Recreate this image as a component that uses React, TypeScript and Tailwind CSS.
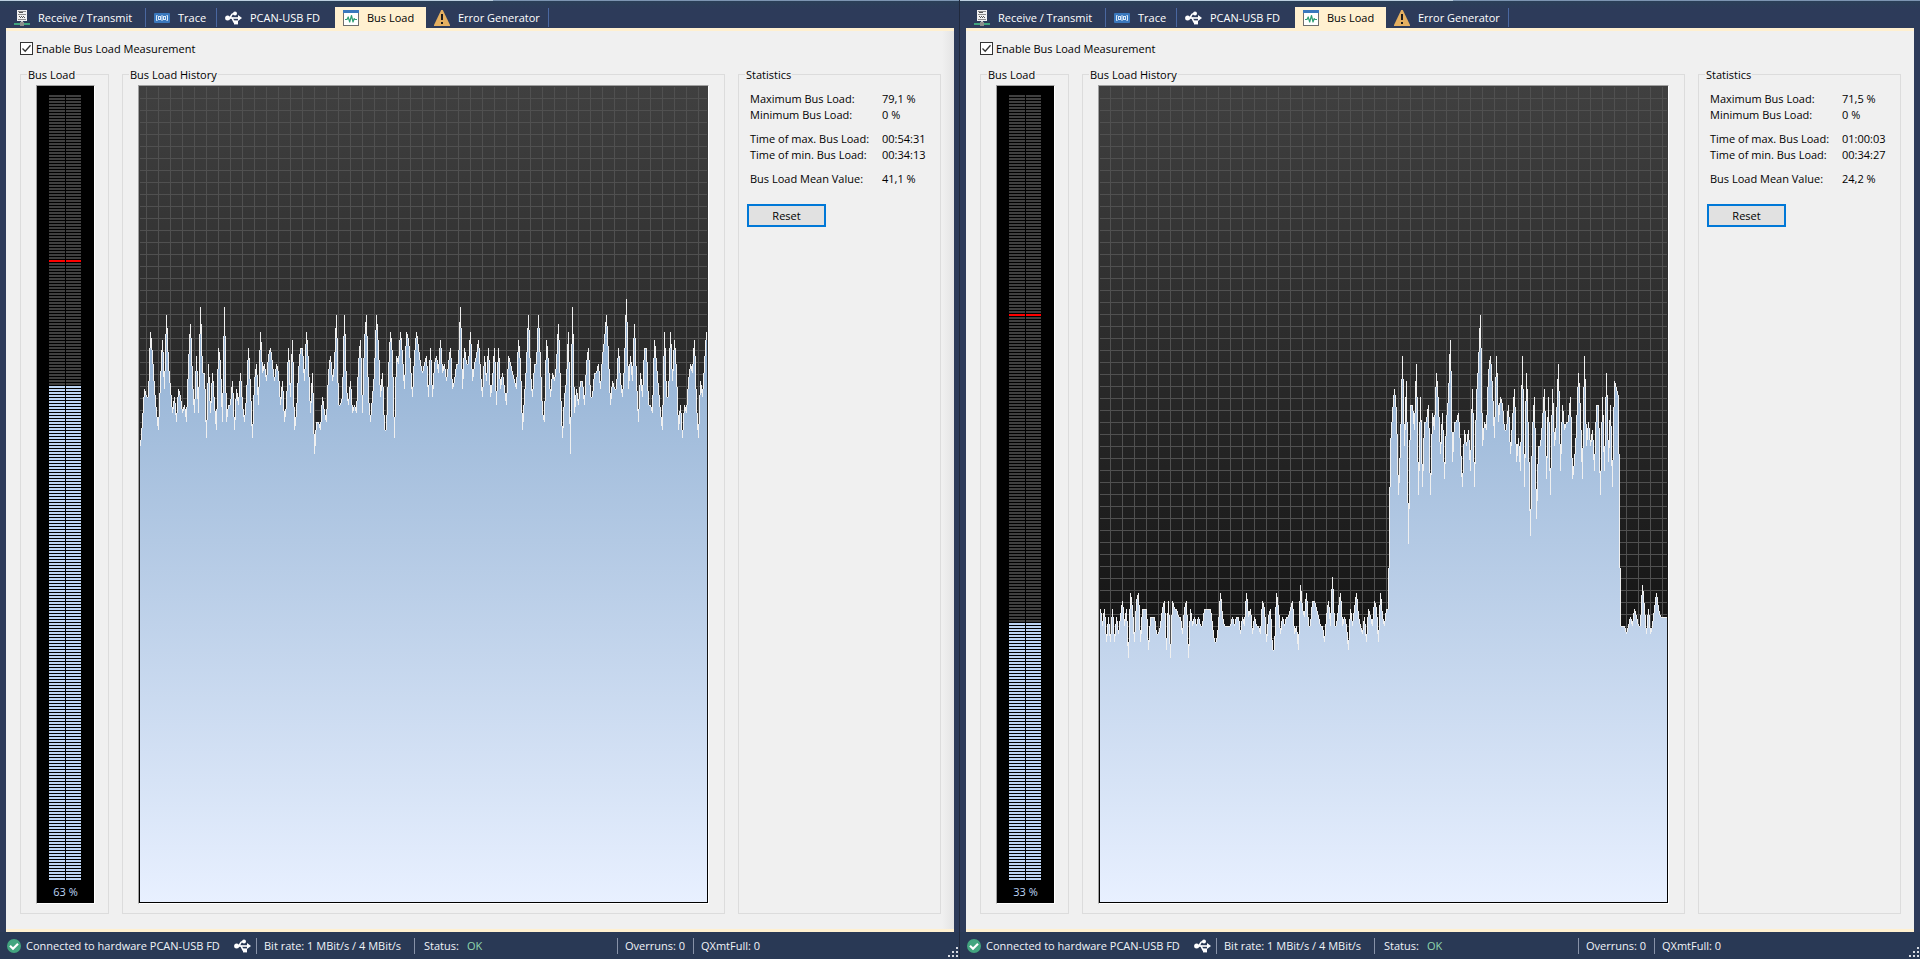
import React from 'react';

type Monitor = {
  id: string;
  load: number;
  lit: number;
  peak: number;
  gridOffset: number;
  history: number[];
  max: string;
  min: string;
  timeMax: string;
  timeMin: string;
  mean: string;
  shaded: boolean;
};

const LEFT_HISTORY = [
  56, 59, 63, 62, 62, 70, 67, 63, 60, 58, 64, 69, 63, 72, 66, 63, 60, 62, 59, 63, 62, 60, 61, 59, 66, 71, 64, 60, 67, 60,
  73, 65, 65, 57, 66, 60, 65, 61, 58, 68, 66, 59, 73, 59, 61, 61, 64, 58, 63, 61, 65, 61, 59, 62, 68, 63, 57, 64, 66, 61,
  70, 65, 66, 64, 67, 68, 66, 64, 66, 65, 61, 64, 59, 61, 68, 62, 69, 58, 60, 65, 68, 68, 64, 70, 66, 60, 65, 55, 59, 59,
  58, 62, 60, 59, 65, 67, 64, 66, 72, 61, 61, 62, 72, 63, 61, 64, 60, 61, 60, 66, 69, 60, 69, 72, 62, 59, 62, 65, 72, 68,
  62, 65, 58, 58, 65, 70, 67, 57, 67, 66, 70, 67, 63, 70, 69, 66, 62, 67, 70, 68, 66, 65, 66, 67, 62, 68, 62, 66, 67, 65,
  69, 65, 66, 64, 66, 68, 63, 64, 66, 66, 73, 63, 68, 66, 66, 70, 64, 66, 67, 69, 65, 62, 67, 64, 68, 62, 64, 68, 61, 68,
  63, 65, 63, 61, 67, 66, 65, 64, 63, 69, 66, 58, 62, 66, 72, 65, 62, 66, 66, 72, 66, 60, 59, 69, 66, 62, 65, 64, 66, 71,
  63, 57, 62, 64, 70, 55, 73, 60, 63, 61, 64, 64, 61, 66, 68, 62, 62, 65, 65, 66, 63, 67, 69, 72, 67, 61, 64, 63, 63, 68,
  64, 62, 66, 74, 63, 67, 64, 71, 64, 59, 65, 62, 68, 68, 61, 61, 60, 69, 66, 63, 60, 58, 70, 62, 62, 70, 64, 69, 65, 58,
  61, 57, 61, 60, 64, 66, 65, 69, 61, 57, 64, 62, 66, 70,
];

const RIGHT_HISTORY = [
  36, 34, 36, 32, 35, 32, 36, 32, 35, 33, 35, 37, 34, 36, 30, 38, 36, 32, 37, 38, 32, 36, 36, 36, 31, 35, 35, 35, 33, 33,
  34, 36, 37, 31, 37, 30, 37, 36, 36, 35, 35, 33, 36, 37, 30, 36, 34, 35, 34, 35, 34, 34, 36, 36, 36, 36, 34, 32, 32, 34,
  38, 35, 34, 34, 34, 34, 35, 34, 35, 35, 33, 35, 34, 38, 35, 36, 33, 35, 34, 34, 33, 37, 36, 32, 35, 36, 31, 31, 38, 36,
  33, 35, 34, 35, 35, 36, 37, 33, 34, 31, 39, 36, 35, 38, 34, 34, 37, 37, 36, 35, 34, 34, 32, 35, 37, 34, 40, 34, 34, 36,
  38, 34, 35, 34, 31, 36, 34, 36, 38, 35, 34, 33, 35, 32, 36, 35, 34, 37, 36, 32, 38, 35, 34, 36, 36, 56, 60, 63, 60, 50,
  56, 67, 56, 64, 44, 61, 61, 58, 66, 50, 62, 51, 59, 59, 61, 50, 60, 58, 65, 61, 55, 60, 52, 59, 62, 69, 54, 59, 59, 60,
  56, 51, 58, 56, 58, 53, 63, 51, 62, 66, 72, 56, 59, 58, 65, 67, 63, 57, 67, 59, 62, 61, 58, 58, 61, 55, 59, 63, 54, 57,
  53, 67, 51, 65, 57, 45, 58, 62, 47, 56, 56, 59, 63, 52, 62, 50, 63, 56, 59, 66, 53, 61, 58, 59, 59, 62, 52, 54, 58, 65,
  60, 52, 67, 56, 59, 56, 58, 53, 61, 61, 50, 62, 53, 65, 54, 61, 51, 64, 63, 62, 34, 34, 34, 33, 34, 35, 34, 36, 35, 34,
  34, 39, 36, 33, 36, 33, 34, 36, 38, 36, 35, 35, 35, 35,
];

const MONITORS: Monitor[] = [
  {
    id: 'a', load: 63, lit: 97, peak: 55, gridOffset: 6, history: LEFT_HISTORY,
    max: '79,1 %', min: '0 %', timeMax: '00:54:31', timeMin: '00:34:13', mean: '41,1 %', shaded: true,
  },
  {
    id: 'b', load: 33, lit: 176, peak: 73, gridOffset: 10, history: RIGHT_HISTORY,
    max: '71,5 %', min: '0 %', timeMax: '01:00:03', timeMin: '00:34:27', mean: '24,2 %', shaded: false,
  },
];

const PLOT_W = 567;
const PLOT_H = 816;
const SEGMENTS = 262;

/** One vertical span per pixel column, two columns per sample. */
function columnSpans(values: number[]): [number, number][] {
  const ys = values.map((v) => PLOT_H + 1 - (v * PLOT_H) / 100);
  const spans: [number, number][] = [];
  ys.forEach((y, i) => {
    const prev = i > 0 ? ys[i - 1] : y;
    const next = i < ys.length - 1 ? ys[i + 1] : y;
    const a = y + (prev - y) / 4;
    const b = y + (next - y) / 4;
    spans.push([Math.min(y, a, b), Math.max(y, a, b)]);
    if (i < ys.length - 1) {
      const c = y + ((next - y) * 3) / 4;
      spans.push([Math.min(b, c), Math.max(b, c)]);
    }
  });
  return spans.map(([t, b]) => [Math.round(t), Math.max(Math.round(t) + 1, Math.round(b))]);
}

function HistoryPlot({ m }: { m: Monitor }) {
  const spans = columnSpans(m.history);
  const line = spans.map(([t, b], x) => `M${x} ${t}h1V${b}h-1z`).join('');
  const area = `M0 ${PLOT_H}` + spans.map(([t], x) => `L${x} ${t}h1`).join('') + `V${PLOT_H}z`;
  return (
    <svg
      className="block h-0 min-h-0 w-full flex-1"
      viewBox={`0 0 ${PLOT_W} ${PLOT_H}`}
      preserveAspectRatio="none"
      shapeRendering="crispEdges"
      role="img"
      aria-label="Bus Load History"
    >
      <defs>
        <linearGradient id={`sky-${m.id}`} gradientUnits="userSpaceOnUse" x1="0" y1="0" x2="0" y2={PLOT_H}>
          <stop offset="0" stopColor="#7098c2" />
          <stop offset="1" stopColor="#e8f0ff" />
        </linearGradient>
        <pattern id={`grid-${m.id}`} patternUnits="userSpaceOnUse" x={m.gridOffset} y="0" width="12" height="12">
          <path d="M0 0h1v12h-1z M0 0h12v1h-12z" fill="#505050" />
        </pattern>
      </defs>
      <rect x="0" y="1" width={PLOT_W} height={PLOT_H - 1} fill={`url(#grid-${m.id})`} />
      <path d={area} fill={`url(#sky-${m.id})`} />
      <path d={line} fill="#f0f0f0" />
    </svg>
  );
}

function Meter({ m }: { m: Monitor }) {
  const bars = [];
  for (let i = 0; i < SEGMENTS; i++) {
    const fill = i === m.peak ? '#ff0000' : i >= m.lit ? '#bdd5f5' : '#404040';
    bars.push(<path key={i} d={`M0 ${i * 3}h16v2h-16z M17 ${i * 3}h15v2h-15z`} fill={fill} />);
  }
  return (
    <div className="flex min-h-0 flex-1 flex-col border border-t-[#a0a0a0] border-l-[#a0a0a0] border-r-white border-b-white bg-black px-3 pt-[9px]">
      <svg className="block h-0 min-h-0 w-8 flex-1" viewBox="0 0 32 785" preserveAspectRatio="none" shapeRendering="crispEdges" role="img" aria-label="Bus Load">
        {bars}
      </svg>
      <div className="flex h-[23px] items-center justify-center whitespace-nowrap text-[#bdd5f5]">{m.load} %</div>
    </div>
  );
}

function ServerIcon() {
  return (
    <svg width="16" height="16" viewBox="0 0 16 16" shapeRendering="crispEdges" aria-hidden="true">
      <path d="M3 0h10v11H3z" fill="#f2f2f2" />
      <path d="M4 1h8v1H4z M4 4h8v1H4z M4 9h8v1H4z" fill="#8a8a8a" />
      <path d="M5 2h4v1H5z M5 6h1v1H5z M6 7h1v1H6z M7 6h1v1H7z M8 7h1v1H8z M9 6h1v1H9z M10 7h1v1h-1z" fill="#555" />
      <path d="M7 11h2v1H7z" fill="#c8c8c8" />
      <path d="M0 13h16v2H0z" fill="#41a47d" />
      <path d="M6 12h4v4H6z" fill="#8d8d8d" />
    </svg>
  );
}

function TraceIcon() {
  return (
    <svg width="16" height="16" viewBox="0 0 16 16" aria-hidden="true">
      <rect x="0" y="3" width="16" height="10" rx="1" fill="#3a78bd" />
      <g fill="none" stroke="#dce9f7" strokeWidth="1">
        <path d="M3.5 5.5h-1v5h1 M12.5 5.5h1v5h-1 M8 5v6" />
        <rect x="4.5" y="6.5" width="2" height="3" />
        <rect x="9.5" y="6.5" width="2" height="3" />
      </g>
    </svg>
  );
}

function UsbIcon() {
  return (
    <svg width="17" height="16" viewBox="0 0 17 16" className="shrink-0" aria-hidden="true">
      <circle cx="2.6" cy="8" r="2.5" fill="#fff" />
      <path d="M2 8h11.5" stroke="#fff" strokeWidth="1.6" />
      <path d="M13 5l4 3-4 3z" fill="#fff" />
      <path d="M4.5 8C6 8 6 3.7 8 3.7h1.6 M6.5 8c1.6 0 1.6 4.3 3.2 4.3h1" stroke="#fff" strokeWidth="1.6" fill="none" />
      <circle cx="10" cy="3.6" r="2" fill="#fff" />
      <rect x="9" y="10.4" width="4" height="4" fill="#fff" />
    </svg>
  );
}

function BusLoadIcon() {
  return (
    <svg width="16" height="16" viewBox="0 0 16 16" aria-hidden="true">
      <path d="M0 0h16v16H0z" fill="#6f6f6f" />
      <path d="M1 3h14v12H1z" fill="#fff" />
      <path d="M0 0h16v3H0z" fill="#3a78bd" />
      <path d="M2 9.5h2l1.2-2.5 1.5 5 1.8-6.5 1.5 6.5 1.2-3.5 .8 1h2" stroke="#2f9e73" strokeWidth="1.2" fill="none" strokeLinejoin="round" />
    </svg>
  );
}

function WarningIcon() {
  return (
    <svg width="16" height="16" viewBox="0 0 16 16" aria-hidden="true">
      <path d="M7.2 0h1.6L16 15v1H0v-1z" fill="#e5b060" />
      <path d="M7 4h2v6H7z M7 12h2v2H7z" fill="#1c1c1c" />
    </svg>
  );
}

function ConnectedIcon() {
  return (
    <svg width="14" height="14" viewBox="0 0 14 14" className="shrink-0" aria-hidden="true">
      <circle cx="7" cy="7" r="7" fill="#43a57f" />
      <path d="M3 6.8l3 3 5-5" stroke="#fff" strokeWidth="2.2" fill="none" />
    </svg>
  );
}

function Divider({ className }: { className: string }) {
  return <span className={`w-px shrink-0 ${className}`} />;
}

const TABS = [
  { label: 'Receive / Transmit', icon: <ServerIcon />, width: 'w-[139px]' },
  { label: 'Trace', icon: <TraceIcon />, width: 'w-[70px]' },
  { label: 'PCAN-USB FD', icon: <UsbIcon />, width: 'w-[118px]' },
  { label: 'Bus Load', icon: <BusLoadIcon />, width: 'w-[91px]' },
  { label: 'Error Generator', icon: <WarningIcon />, width: 'w-[122px]' },
];

function TabStrip() {
  return (
    <div className="flex h-[27px] shrink-0 items-end bg-linear-to-b/srgb from-[#2b4058] to-[#2d3b5a] to-30% pl-[6px]" role="tablist">
      {TABS.map((tab, i) => {
        const active = i === 3;
        return (
          <React.Fragment key={tab.label}>
            <button
              type="button"
              role="tab"
              aria-selected={active}
              className={`flex h-[21px] items-center gap-2 whitespace-nowrap pl-2 ${tab.width} ${active ? 'bg-[#fff0d0] text-black' : 'text-white'}`}
            >
              <span className="shrink-0">{tab.icon}</span>
              {tab.label}
            </button>
            {i !== 2 && i !== 3 && <Divider className="mb-px h-[19px] bg-[#4a67a0]" />}
          </React.Fragment>
        );
      })}
    </div>
  );
}

function Group({ title, className, bodyClassName, children }: { title: string; className: string; bodyClassName: string; children: React.ReactNode }) {
  return (
    <fieldset className={`flex min-h-0 min-w-0 flex-col border border-[#dcdcdc] ${className}`}>
      <legend className="ml-[6px] h-4 whitespace-nowrap px-px pt-px leading-4">{title}</legend>
      <div className={`flex min-h-0 flex-1 flex-col ${bodyClassName}`}>{children}</div>
    </fieldset>
  );
}

function StatRow({ label, value }: { label: string; value: string }) {
  return (
    <div className="flex">
      <dt className="w-[132px] shrink-0 whitespace-nowrap">{label}</dt>
      <dd className="whitespace-nowrap">{value}</dd>
    </div>
  );
}

function StatusBar() {
  return (
    <footer className="flex h-[27px] shrink-0 items-center bg-[#293955] pl-[7px] text-[#f0f3f8]">
      <ConnectedIcon />
      <span className="w-[209px] shrink-0 whitespace-nowrap pl-[5px]">Connected to hardware PCAN-USB FD</span>
      <span className="w-[26px] pl-[4px]">
        <UsbIcon />
      </span>
      <Divider className="h-4 bg-[#8792a8]" />
      <span className="w-[157px] whitespace-nowrap pl-[7px]">Bit rate: 1 MBit/s / 4 MBit/s</span>
      <Divider className="h-4 bg-[#8792a8]" />
      <span className="w-[52px] pl-[9px]">Status:</span>
      <span className="text-[#8fd8ae]">OK</span>
      <span className="flex-1" />
      <Divider className="h-4 bg-[#8792a8]" />
      <span className="w-[75px] whitespace-nowrap pl-[7px]">Overruns: 0</span>
      <Divider className="h-4 bg-[#8792a8]" />
      <span className="w-[254px] whitespace-nowrap pl-[7px]">QXmtFull: 0</span>
      <svg className="mr-px mb-[2px] self-end" width="10" height="10" viewBox="0 0 10 10" aria-hidden="true">
        <path d="M8 0h2v2H8z M4 4h2v2H4z M8 4h2v2H8z M0 8h2v2H0z M4 8h2v2H4z M8 8h2v2H8z" fill="#d6dae2" />
      </svg>
    </footer>
  );
}

function MonitorWindow({ m }: { m: Monitor }) {
  return (
    <section className={`flex min-h-0 min-w-0 flex-col bg-[#2d3b5a] ${m.shaded ? 'border-r border-[#20293d]' : ''}`}>
      <div className="flex h-px shrink-0">
        <div className="w-[493px] bg-[#bccfe0]" />
        <div className="flex-1 bg-[#7d95b2]" />
      </div>
      <TabStrip />
      <main className={`ml-[6px] flex min-h-0 flex-1 flex-col border-t-3 border-b-3 border-[#fff0d0] bg-[#f0f0f0] pt-[11px] pr-[13px] pb-[15px] pl-[14px] ${m.shaded ? 'mr-[5px] bg-linear-to-l/srgb from-[#e4e4e4] to-[#f0f0f0] to-[12px]' : 'mr-[6px]'}`}>
        <label className="flex h-[13px] shrink-0 items-center gap-[3px] self-start">
          <span className="relative block size-[13px]">
            <input type="checkbox" defaultChecked className="peer block size-[13px] appearance-none border border-[#333] bg-white" />
            <svg className="pointer-events-none absolute inset-0 hidden peer-checked:block" width="13" height="13" viewBox="0 0 13 13" aria-hidden="true">
              <path d="M2.5 6.5l2.700 2.800 5.300-6" stroke="#333" strokeWidth="1.3" fill="none" />
            </svg>
          </span>
          Enable Bus Load Measurement
        </label>
        <div className="mt-[11px] flex min-h-0 flex-1 gap-[13px]">
          <Group title="Bus Load" className="w-[89px] shrink-0" bodyClassName="pt-[3px] pr-[13px] pb-[9px] pl-[15px]">
            <Meter m={m} />
          </Group>
          <Group title="Bus Load History" className="flex-1" bodyClassName="px-[15px] pt-[3px] pb-[9px]">
            <div className="flex min-h-0 flex-1 flex-col border border-t-[#a0a0a0] border-l-[#a0a0a0] border-r-white border-b-white bg-linear-to-b/srgb from-[#404040] to-black px-px pb-px">
              <HistoryPlot m={m} />
            </div>
          </Group>
          <Group title="Statistics" className="w-[203px] shrink-0" bodyClassName="items-start pt-[9px] pl-[8px]">
            <dl className="flex flex-col gap-2 pl-[3px] leading-4">
              <div>
                <StatRow label="Maximum Bus Load:" value={m.max} />
                <StatRow label="Minimum Bus Load:" value={m.min} />
              </div>
              <div>
                <StatRow label="Time of max. Bus Load:" value={m.timeMax} />
                <StatRow label="Time of min. Bus Load:" value={m.timeMin} />
              </div>
              <StatRow label="Bus Load Mean Value:" value={m.mean} />
            </dl>
            <button type="button" className="mt-[17px] h-[23px] w-[79px] border-2 border-[#0078d7] bg-[#e1e1e1]">
              Reset
            </button>
          </Group>
        </div>
      </main>
      <StatusBar />
    </section>
  );
}

export default function App() {
  return (
    <div className="grid h-screen grid-cols-2 font-['Open_Sans','Noto_Sans',sans-serif] text-[11px] leading-4 text-black">
      {MONITORS.map((m) => (
        <MonitorWindow key={m.id} m={m} />
      ))}
    </div>
  );
}
